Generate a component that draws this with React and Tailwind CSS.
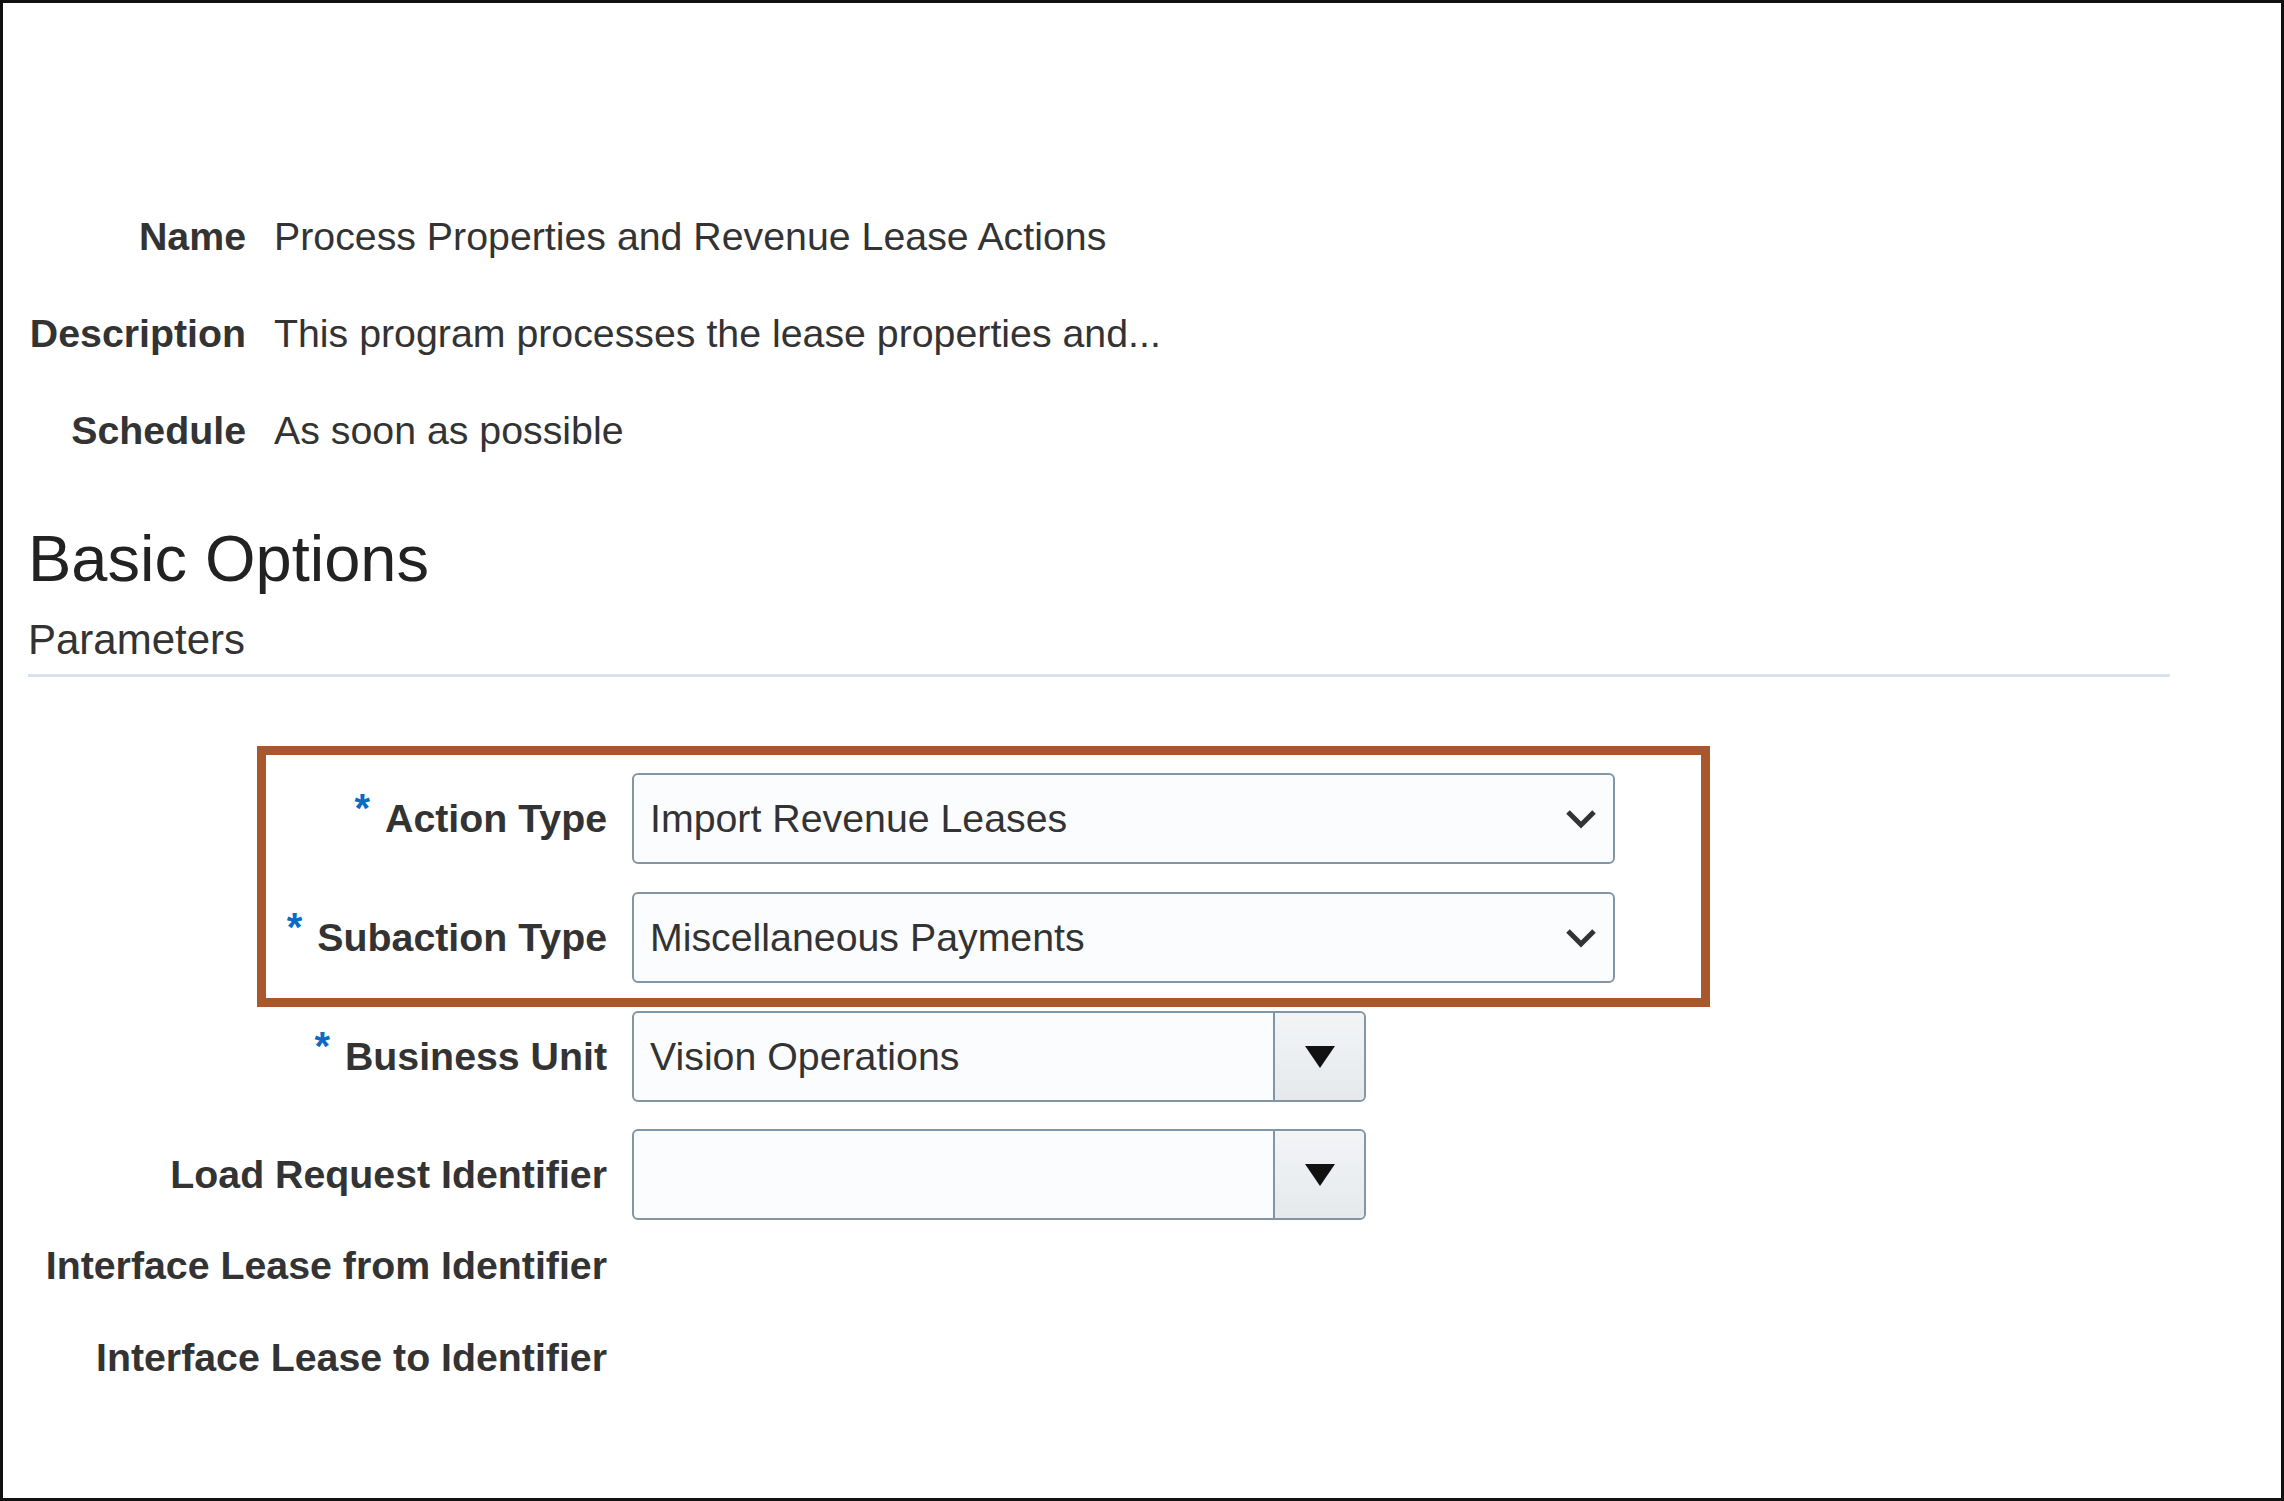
function Asterisk() {
    return <span className="mr-[15px] mb-[22px] text-[40px] leading-none font-bold text-[#0a6bc4]">*</span>;
}

function FieldLabel({ text, required, width }) {
    return (
        <div className={`flex items-center justify-end shrink-0 ${width}`}>
            {required && <Asterisk />}
            <span className="text-[39.3px] font-bold leading-none text-[#333]">{text}</span>
        </div>
    );
}

function SelectBox({ value }) {
    return (
        <div className="flex h-[91px] w-[983px] items-center justify-between rounded-[6px] border-2 border-[#8396a5] bg-[#fbfcfe] pl-[16px] pr-[14px]">
            <span className="text-[39.3px] leading-none text-[#333]">{value}</span>
            <svg width="32" height="20" viewBox="0 0 32 20" className="mr-[2px]">
                <polyline points="3,3 16,16 29,3" fill="none" stroke="#333" strokeWidth="5" />
            </svg>
        </div>
    );
}

function ComboBox({ value }) {
    return (
        <div className="flex h-[91px] w-[734px] rounded-[6px] border-2 border-[#8396a5] bg-[#fbfcfe]">
            <div className="flex flex-1 items-center pl-[16px] text-[39.3px] leading-none text-[#333]">{value}</div>
            <div className="flex w-[91px] items-center justify-center rounded-r-[5px] border-l-2 border-[#8396a5] bg-gradient-to-b from-[#f2f4f6] to-[#e6e9ec]">
                <svg width="30" height="22" viewBox="0 0 30 22">
                    <polygon points="0,0 30,0 15,22" fill="#111" />
                </svg>
            </div>
        </div>
    );
}

function InfoRow({ label, value }) {
    return (
        <div className="flex h-[97px] items-center gap-[28px]">
            <div className="w-[243px] text-right text-[39.3px] font-bold leading-none text-[#333]">{label}</div>
            <div className="text-[39.3px] leading-none text-[#333]">{value}</div>
        </div>
    );
}

export default function App() {
    return (
        <div className="h-[1501px] w-[2284px] border-[3px] border-[#111] bg-white font-['Liberation_Sans',Arial,sans-serif] text-[#333]">
            <div className="pt-[185px]">
                <InfoRow label="Name" value="Process Properties and Revenue Lease Actions" />
                <InfoRow label="Description" value="This program processes the lease properties and..." />
                <InfoRow label="Schedule" value="As soon as possible" />
            </div>

            <div className="ml-[25px] mt-[47px] h-[65px] text-[65px] leading-none text-[#222]">Basic Options</div>
            <div className="ml-[25px] mt-[28px] h-[42px] text-[42px] leading-none text-[#333]">Parameters</div>
            <div className="ml-[25px] mt-[13px] h-[3px] w-[2142px] bg-[#d9e1ea]" />

            <div className="ml-[254px] mt-[69px] w-[1453px] border-[9px] border-[#a9572c] pb-[15px] pt-[18px]">
                <div className="flex items-center gap-[25px]">
                    <FieldLabel text="Action Type" required width="w-[341px]" />
                    <SelectBox value="Import Revenue Leases" />
                </div>
                <div className="mt-[28px] flex items-center gap-[25px]">
                    <FieldLabel text="Subaction Type" required width="w-[341px]" />
                    <SelectBox value="Miscellaneous Payments" />
                </div>
            </div>

            <div className="mt-[4px] flex items-center gap-[25px]">
                <FieldLabel text="Business Unit" required width="w-[604px]" />
                <ComboBox value="Vision Operations" />
            </div>
            <div className="mt-[27px] flex items-center gap-[25px]">
                <FieldLabel text="Load Request Identifier" width="w-[604px]" />
                <ComboBox value="" />
            </div>
            <div className="flex h-[92px] items-center gap-[25px]">
                <FieldLabel text="Interface Lease from Identifier" width="w-[604px]" />
            </div>
            <div className="flex h-[92px] items-center gap-[25px]">
                <FieldLabel text="Interface Lease to Identifier" width="w-[604px]" />
            </div>
        </div>
    );
}
